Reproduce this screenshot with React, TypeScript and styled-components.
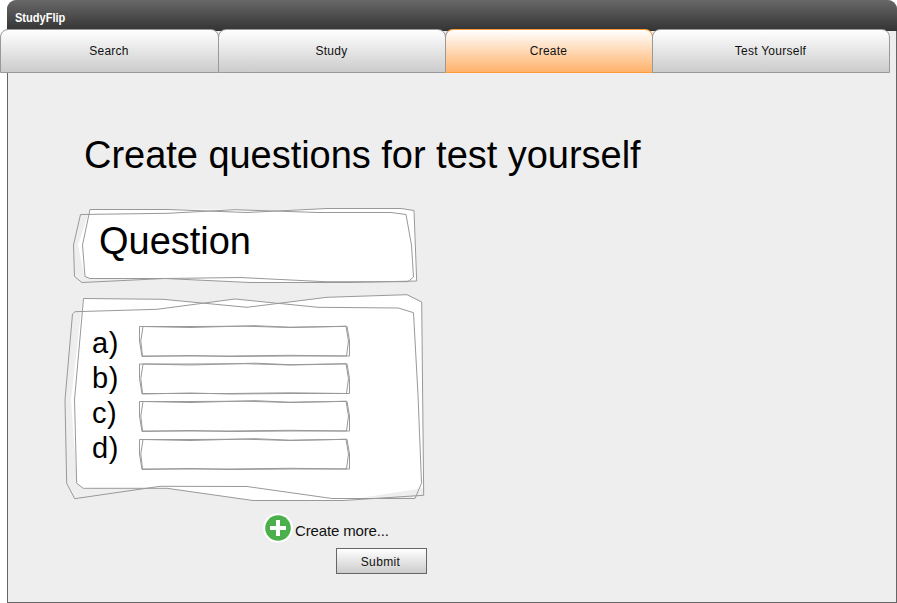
import React from "react";
import styled, { createGlobalStyle, css } from "styled-components";

const Global = createGlobalStyle`
  *{box-sizing:border-box}
  body{margin:0;background:#fff;font-family:"Liberation Sans",Arial,sans-serif;color:#000;overflow:hidden}
`;
const Page = styled.div`width:897px;height:603px;padding-left:7px;`;
const Win = styled.div`
  width:890px;height:603px;background:#eee;border:1px solid #666;border-top:0;border-radius:10px 10px 0 0;
`;
const Title = styled.header`
  height:31px;margin:0 -1px;padding:11px 0 0 8px;border-radius:9px 9px 0 0;
  background:linear-gradient(#686868,#333);color:#fff;
  font:bold 12px/14px "Liberation Sans",Arial,sans-serif;
`;
const TitleText = styled.span`display:block;width:max-content;transform-origin:0 0;transform:scaleX(.92);`;
const Tabs = styled.nav`
  display:grid;grid-template-columns:218px 227px 207px 238px;width:890px;height:44px;margin:-2px 0 0 -8px;
`;
const Tab = styled.button<{ $active?: boolean }>`
  height:44px;margin:0 -1px 0 0;padding:0 1px 0 0;border:1px solid #999;border-radius:8px 8px 0 0;
  background:linear-gradient(#fff,#ccc);color:#111;
  font:12px "Liberation Sans",Arial,sans-serif;letter-spacing:.25px;
  ${(p) => p.$active && css`border-color:#ff9c3a #ff9c3a #ff9c3a #999;background:linear-gradient(#fff,#ffb26b);`}
  &:last-child{margin-right:0}
`;
const Content = styled.main`padding:57px 0 0 56px;`;
const Heading = styled.h1`
  margin:0 0 24px 20px;height:53px;font-size:38px;line-height:50px;font-weight:400;letter-spacing:-.03px;white-space:nowrap;
`;
const Panel = styled.section<{ $h: number }>`position:relative;width:364px;height:${(p) => p.$h}px;`;
const Sketch = styled.svg`position:absolute;inset:0;overflow:visible;pointer-events:none;`;
const Question = styled.div`position:relative;padding:9px 0 0 35px;font-size:38px;line-height:50px;letter-spacing:-.03px;`;
const Answers = styled.div`position:relative;display:grid;grid-auto-rows:35px;padding:33px 0 0 28px;`;
const Answer = styled.label`font-size:29px;line-height:34px;letter-spacing:.5px;`;
const More = styled.div`display:flex;align-items:center;height:32px;margin:5px 0 0 199px;font-size:15px;letter-spacing:-.15px;color:#111;`;
const MoreText = styled.span`margin:5px 0 0 2px;`;
const Submit = styled.button`
  display:block;width:91px;height:26px;margin:4px 0 0 272px;padding:1px 2px 0 0;border:1px solid #666;
  background:linear-gradient(#fff,#ccc);color:#111;font:12px "Liberation Sans",Arial,sans-serif;letter-spacing:.35px;
`;

const fields = [326, 363.5, 401, 439];

export default function App() {
  return (
    <Page>
      <Global />
      <Win>
        <Title><TitleText>StudyFlip</TitleText></Title>
        <Tabs>
          <Tab>Search</Tab>
          <Tab>Study</Tab>
          <Tab $active>Create</Tab>
          <Tab>Test Yourself</Tab>
        </Tabs>
        <Content>
          <Heading>Create questions for test yourself</Heading>
          <Panel $h={86}>
            <Sketch width="364" height="86" viewBox="64 207 364 86">
              <path fill="#fff" d="M90 209.5 168 209.5 235 209.5 247 211 327 208.5 401 208.5 414 210.5 417 281 350 282.5 250 282.5 165 278.3 90 278.5 84 275 78 245 87 218Z" />
              <g fill="none" stroke="#999" strokeWidth="1">
                <path d="M90 209.5 168 209.5 247 212.5 327 208.5 401 208.5 414 210.5 416.7 281 350 282.5 250 282.5 165 278.5 90 278.5 85 276.5 82.5 245Z" />
                <path d="M80.5 214.5 168 213.3 235 209.7 318 212.5 391 212.5 406 214.5 411.5 245 413.5 277 408 281.7 325 281.7 240 277.5 165 278.5 82 282.5 74.5 276.5 73.5 245Z" />
              </g>
            </Sketch>
            <Question>Question</Question>
          </Panel>
          <Panel $h={214}>
            <Sketch width="364" height="214" viewBox="64 293 364 214">
              <path fill="#fff" d="M83 298.3 163 299.3 201 303 235 299 283 303 327 297.3 407 294.7 421.7 302 423.5 488 360 498 343 500.7 253 500.7 167 488.3 83 488.3 77 483 71 400 81 312Z" />
              <g fill="none" stroke="#999" strokeWidth="1">
                <path d="M83.5 298.5 163 299.3 247 307.3 327 297.3 407 294.7 421.7 302 423.7 495.3 343 500.5 253 500.5 167 488.3 83.3 488.3 76.7 483.3 74.5 400Z" />
                <path d="M75 311.7 157 309.3 235 299 318 307.3 398.3 308 413.5 312.7 418 395 421.5 483.3 415 498.5 332 498.5 247 486.5 160 486.3 74.7 498.7 66.7 483.3 65 400 72.5 314Z" />
                {fields.map((y) => (
                  <g key={y} transform={`translate(0 ${y})`}>
                    <path d="M139.5 .5 190 .5 245 .2 290 1.5 347 .3 349.5 15 349.5 30 290 30 230 30.5 190 29.5 142 30.5 139.5 15Z" />
                    <path d="M143 .5 190 1.5 255 -.3 290 1.2 346 .3 348.5 15 346.5 30 290 29.3 230 30 190 30 142.5 30 140.8 15Z" />
                  </g>
                ))}
              </g>
            </Sketch>
            <Answers>
              {["a)", "b)", "c)", "d)"].map((a) => <Answer key={a}>{a}</Answer>)}
            </Answers>
          </Panel>
          <More>
            <svg width="30" height="30" viewBox="0 0 30 30">
              <circle cx="15" cy="15" r="14.8" fill="#fff" />
              <circle cx="15" cy="15" r="12.8" fill="#4bb04b" />
              <path d="M15 7v16M7 15h16" stroke="#fff" strokeWidth="4" />
            </svg>
            <MoreText>Create more...</MoreText>
          </More>
          <Submit>Submit</Submit>
        </Content>
      </Win>
    </Page>
  );
}
